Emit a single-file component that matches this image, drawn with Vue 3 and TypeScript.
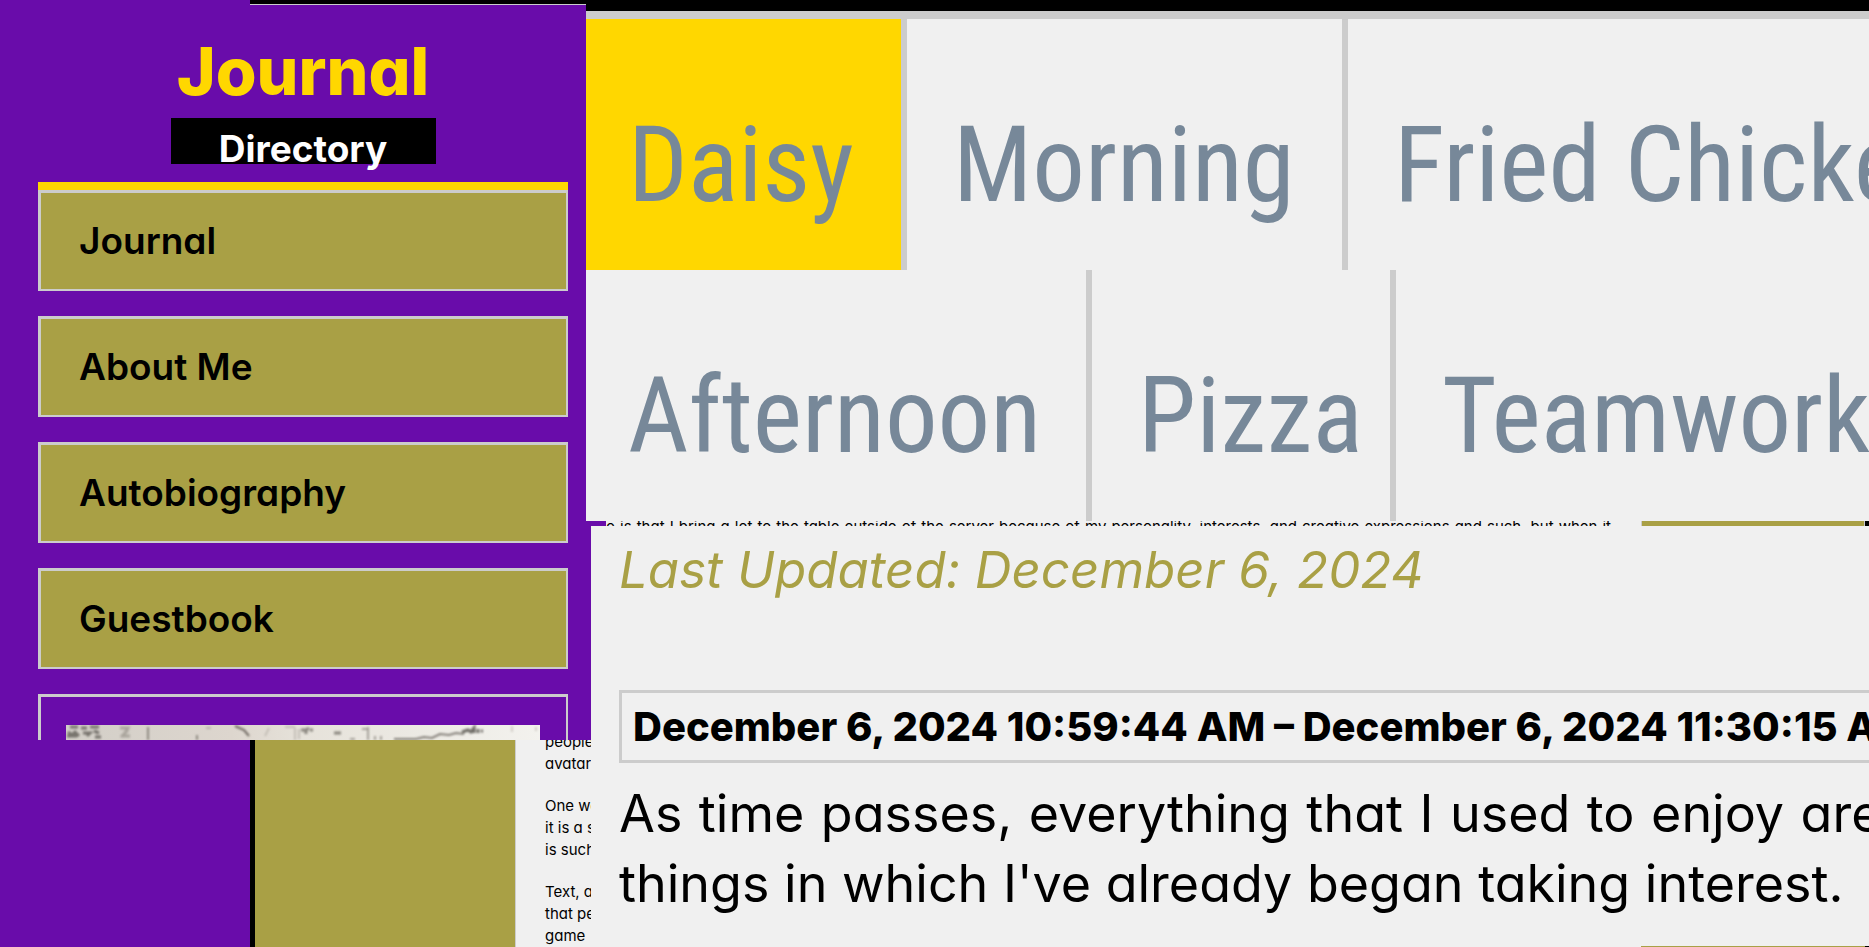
<script setup lang="ts">
interface Tab {
  label: string
  active?: boolean
}

const directory: string[] = ['Journal', 'About Me', 'Autobiography', 'Guestbook']

const tabRows: Tab[][] = [
  [{ label: 'Daisy', active: true }, { label: 'Morning' }, { label: 'Fried Chicken' }],
  [{ label: 'Afternoon' }, { label: 'Pizza' }, { label: 'Teamwork' }],
]

const excerpts: string[][] = [
  ['people', 'avatar'],
  ['One we', 'it is a s', 'is such'],
  ['Text, an', 'that pe', 'game'],
]
</script>

<template>
  <div class="page">
    <div class="backdrop">
      <div class="band violet"></div>
      <div class="band black"></div>
      <div class="band olive"></div>
      <div class="excerpt">
        <p v-for="(lines, i) in excerpts" :key="i">
          <span v-for="line in lines" :key="line">{{ line }}</span>
        </p>
      </div>
    </div>

    <div class="front">
      <aside class="sidebar">
        <div class="top-edge"></div>
        <header class="masthead">
          <h1>Journal</h1>
          <h2>Directory</h2>
        </header>
        <nav class="directory" aria-label="Directory">
          <a v-for="item in directory" :key="item" href="#" class="entry">{{ item }}</a>
          <div class="picture-frame">
            <svg class="picture" viewBox="0 0 474 15" preserveAspectRatio="none" aria-hidden="true">
              <defs>
                <linearGradient id="paper" x1="0" x2="1" y1="0" y2="0">
                  <stop offset="0" stop-color="#d3cfc8" />
                  <stop offset="0.35" stop-color="#ddd6ce" />
                  <stop offset="0.5" stop-color="#e6e2da" />
                  <stop offset="1" stop-color="#f3f2ee" />
                </linearGradient>
                <filter id="soft"><feGaussianBlur stdDeviation="1" /></filter>
              </defs>
              <rect width="474" height="15" fill="url(#paper)" />
              <g filter="url(#soft)" fill="none" stroke="#77736d" stroke-width="2">
                <path d="M4 2h8m3 1h6m3-1h9M2 7l4 3 3-3 4 4m4-3h7l-3 3m7-5l5 2m-4 4h6M1 11h10" stroke-width="3" />
                <path d="M54 3l8 0-5 8 7 0M55 12l7-7" stroke="#aaa59d" stroke-width="3" />
                <path d="M82 2v13M131 10v5" stroke="#8f8a82" />
                <path d="M140 3h5" stroke="#b8b3aa" />
                <path d="M169 1l9 4 5 6" stroke="#6f6861" />
                <path d="M203 3l-4 8M219 2h10M229 3v12m4-11v10" stroke="#c4bfb7" />
                <path d="M235 5h5l3-2m-3 3v3m4-4h3M268 8h7" stroke="#8b8780" stroke-width="3" />
                <path d="M296 4l7 0m-1-2v13m7-4v4m6-4v4M284 14h5" stroke="#a5a19a" />
                <path d="M328 14h22l8-2 8 1 8-4 9 1 7-2 8 1" stroke="#85817a" />
                <path d="M396 7l6-2 3 2 3-4 0 5m4-4v4m3-2h2" stroke="#706d67" stroke-width="3" />
                <path d="M446 1v6M470 2v4" stroke="#d2cec7" />
              </g>
            </svg>
          </div>
        </nav>
      </aside>

      <main class="content">
        <div class="black-bar"></div>
        <nav class="tabs" aria-label="Entries">
          <div v-for="(row, r) in tabRows" :key="r" class="tab-row" :class="r === 0 ? 'first' : 'second'">
            <a v-for="tab in row" :key="tab.label" href="#" class="tab" :class="{ active: tab.active }">{{ tab.label }}</a>
          </div>
        </nav>
        <div class="peek">
          <div class="peek-violet"></div>
          <p>o is that I bring a lot to the table outside of the server because of my personality, interests, and creative expressions and such, but when it</p>
          <div class="peek-olive"></div>
          <div class="peek-black"></div>
        </div>
        <article class="post">
          <p class="updated">Last Updated: December 6, 2024</p>
          <h3>December 6, 2024 10:59:44 AM – December 6, 2024 11:30:15 AM</h3>
          <div class="body">
            <p class="spread">As time passes, everything that I used to enjoy are</p>
            <p>things in which I've already began taking interest.</p>
          </div>
        </article>
        <div class="foot">
          <div class="foot-olive"></div>
          <div class="foot-black"></div>
        </div>
      </main>
    </div>
  </div>
</template>

<style>
body {
  margin: 0;
  background: #f0f0f0;
}
</style>

<style scoped>
.page {
  display: grid;
  height: 100vh;
  overflow: hidden;
  color: #000;
  font-family: Inter, 'Liberation Sans', sans-serif;
  font-feature-settings: 'cv11';
}

h1,
h2,
h3,
p {
  margin: 0;
}

a {
  color: inherit;
  text-decoration: none;
}

.backdrop,
.front {
  grid-area: 1 / 1;
  min-width: 0;
  min-height: 0;
}

.backdrop {
  display: grid;
  grid-template-columns: 250px 5px 261px 1fr;
  background: #f0f0f0;
}

.violet {
  background: #690caa;
}

.black {
  background: #000;
}

.olive {
  background: #a9a045;
  border-right: 1px solid #ccc;
}

.excerpt {
  display: flex;
  flex-direction: column;
  justify-content: flex-end;
  gap: 20px;
  padding-left: 29px;
  font-size: 15px;
  line-height: 22px;
}

.excerpt span {
  display: block;
}

.front {
  display: grid;
  grid-template-columns: 591px 1fr;
}

.sidebar {
  display: flex;
  flex-direction: column;
  align-self: start;
  height: 740px;
  overflow: hidden;
  background: #690caa;
}

.top-edge {
  flex: none;
  height: 4px;
  margin-left: 250px;
  margin-right: 5px;
  background: #000;
  border-bottom: 1px solid #ccc;
}

.masthead {
  display: flex;
  flex-direction: column;
  align-items: center;
  margin-left: 38px;
  margin-right: 23px;
  padding-top: 24px;
  border-bottom: 8px solid #ffd700;
}

h1 {
  color: #ffd700;
  font-size: 66px;
  font-weight: 800;
  line-height: 84px;
}

h2 {
  box-sizing: border-box;
  width: 50%;
  height: 46px;
  margin: 5px 0 18px;
  padding-top: 9px;
  background: #000;
  color: #fff;
  font-size: 37px;
  font-weight: 700;
  line-height: 44px;
  text-align: center;
}

.directory {
  display: flex;
  flex-direction: column;
  gap: 25px;
  margin-left: 38px;
  margin-right: 23px;
}

.entry {
  box-sizing: border-box;
  height: 101px;
  padding-left: 38px;
  border: solid #ccc;
  border-width: 3px 2px 2px 3px;
  background: #a9a045;
  font-size: 37px;
  font-weight: 600;
  line-height: 96px;
}

.picture-frame {
  box-sizing: border-box;
  height: 101px;
  padding: 28px 26px 0 25px;
  border: solid #ccc;
  border-width: 3px 2px 2px 3px;
}

.picture {
  display: block;
  width: 100%;
  height: 15px;
}

.content {
  display: flex;
  flex-direction: column;
  min-width: 0;
}

.black-bar {
  height: 11px;
  margin-left: -5px;
  background: #000;
}

.tabs {
  margin-left: -5px;
  border-top: 8px solid #ccc;
  background: #f0f0f0;
}

.tab-row {
  display: grid;
}

.first {
  grid-template-columns: 321fr 441fr 521fr;
}

.second {
  grid-template-columns: 506fr 304fr 473fr;
}

.tab {
  box-sizing: border-box;
  height: 251px;
  min-width: 0;
  padding-left: 42px;
  overflow: hidden;
  border-right: 6px solid #ccc;
  color: #778899;
  font-family: 'Roboto Condensed', Roboto, sans-serif;
  font-size: 105px;
  line-height: 294px;
  white-space: nowrap;
}

.tab:not(:first-child) {
  padding-left: 46px;
}

.tab:last-child {
  border-right: 0;
}

.active {
  background: #ffd700;
}

.peek {
  display: flex;
  height: 5px;
  overflow: hidden;
  background: #f0f0f0;
}

.peek-violet {
  width: 15px;
  background: #690caa;
}

.peek p {
  flex: 1;
  overflow: hidden;
  font-size: 15px;
  line-height: 12px;
  text-align: justify;
  text-align-last: justify;
  white-space: nowrap;
  padding-right: 30px;
}

.peek-olive {
  width: 222px;
  border: solid #ccc;
  border-width: 0 1px;
  background: #a9a045;
}

.peek-black {
  width: 4px;
  background: #000;
}

.post {
  flex: 1;
  min-width: 0;
  padding-left: 28px;
  overflow: hidden;
  background: #f0f0f0;
  white-space: nowrap;
}

.updated {
  padding-top: 16px;
  color: #a9a045;
  font-size: 51px;
  font-style: italic;
  line-height: 56px;
}

h3 {
  margin-top: 92px;
  padding-left: 11px;
  border: 3px solid #ccc;
  border-right: 0;
  font-size: 40px;
  font-weight: 800;
  line-height: 67px;
}

.body {
  margin-top: 16px;
  font-size: 52px;
  line-height: 70px;
}

.spread {
  width: 101%;
  text-align: justify;
  text-align-last: justify;
}

.foot {
  display: flex;
  justify-content: flex-end;
  height: 1px;
}

.foot-olive {
  width: 224px;
  background: #a9a045;
}

.foot-black {
  width: 4px;
  background: #000;
}
</style>
